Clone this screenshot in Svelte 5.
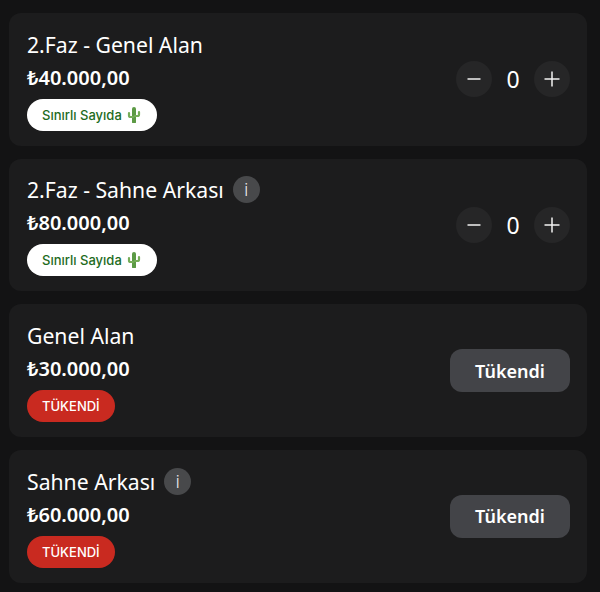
<script>
	const tickets = [
		{ name: '2.Faz - Genel Alan', price: '₺40.000,00', soldOut: false, info: false },
		{ name: '2.Faz - Sahne Arkası', price: '₺80.000,00', soldOut: false, info: true },
		{ name: 'Genel Alan', price: '₺30.000,00', soldOut: true, info: false },
		{ name: 'Sahne Arkası', price: '₺60.000,00', soldOut: true, info: true }
	];

	let counts = $state([0, 0, 0, 0]);

	function change(i, by) {
		counts[i] = Math.max(0, counts[i] + by);
	}
</script>

<div class="list">
	{#each tickets as ticket, i}
		<div class="card">
			<div class="details">
				<div class="title">
					<span>{ticket.name}</span>
					{#if ticket.info}
						<span class="info">i</span>
					{/if}
				</div>
				<div class="price">{ticket.price}</div>
				{#if ticket.soldOut}
					<span class="badge sold">TÜKENDİ</span>
				{:else}
					<span class="badge limited">
						Sınırlı Sayıda
						<svg width="14" height="16" viewBox="0 0 14 16" aria-hidden="true">
							<path d="M7 2v13" stroke="#5c9a45" stroke-width="4" stroke-linecap="round" fill="none" />
							<path d="M2 6v2.4q0 1.6 1.6 1.6H6M12 5v2.4Q12 9 10.4 9H8" stroke="#76ad58" stroke-width="2.2" stroke-linecap="round" fill="none" />
						</svg>
					</span>
				{/if}
			</div>
			{#if ticket.soldOut}
				<button class="soldout-btn" disabled>Tükendi</button>
			{:else}
				<div class="stepper">
					<button class="round" aria-label="Azalt" onclick={() => change(i, -1)}>
						<svg width="16" height="16" viewBox="0 0 16 16"><path d="M1.5 8h13" stroke="#f2f2f2" stroke-width="1.5" /></svg>
					</button>
					<span class="count">{counts[i]}</span>
					<button class="round" aria-label="Artır" onclick={() => change(i, 1)}>
						<svg width="16" height="16" viewBox="0 0 16 16"><path d="M.5 8h15M8 .5v15" stroke="#f2f2f2" stroke-width="1.5" /></svg>
					</button>
				</div>
			{/if}
		</div>
	{/each}
</div>

<style>
	:global(body) {
		background: #131314;
	}

	.list {
		display: flex;
		flex-direction: column;
		gap: 13px;
		padding: 13px 13px 9px 9px;
		font-family: 'Noto Sans', sans-serif;
		color: #fff;
	}

	.card {
		display: flex;
		align-items: center;
		justify-content: space-between;
		height: 132.67px;
		box-sizing: border-box;
		padding: 0 18px;
		background: #1c1c1d;
		border-radius: 12px;
	}

	.details {
		display: flex;
		flex-direction: column;
		align-items: flex-start;
		padding-top: 3px;
	}

	.title {
		display: flex;
		align-items: center;
		gap: 9px;
		height: 27px;
		font-size: 21.2px;
		line-height: 27px;
	}

	.info {
		display: flex;
		align-items: center;
		justify-content: center;
		width: 27px;
		height: 27px;
		border-radius: 50%;
		background: #48494b;
		color: #f0f0f0;
		font-size: 19px;
		font-weight: 300;
	}

	.price {
		margin-top: 7px;
		font-size: 20px;
		font-weight: 600;
		line-height: 26px;
	}

	.badge {
		display: inline-flex;
		align-items: center;
		gap: 5px;
		height: 32px;
		margin-top: 8px;
		padding: 0 15px;
		border-radius: 16px;
		font-family: Inter, sans-serif;
		font-size: 13px;
		font-weight: 500;
	}

	.limited {
		padding-right: 16px;
		background: #fff;
		color: #1e6b1e;
	}

	.sold {
		background: #c92a20;
		color: #fff;
	}

	.stepper {
		display: flex;
		align-items: center;
		gap: 12px;
		margin-right: -1px;
	}

	.round {
		display: flex;
		align-items: center;
		justify-content: center;
		width: 36px;
		height: 36px;
		padding: 0;
		border: none;
		border-radius: 50%;
		background: #262627;
		cursor: pointer;
	}

	.count {
		width: 18px;
		text-align: center;
		font-size: 23px;
	}

	.soldout-btn {
		width: 120px;
		height: 43px;
		margin-right: -1px;
		border: none;
		border-radius: 12px;
		background: #434448;
		color: #fff;
		font-family: 'Noto Sans', sans-serif;
		font-size: 18px;
		font-weight: 600;
	}
</style>
